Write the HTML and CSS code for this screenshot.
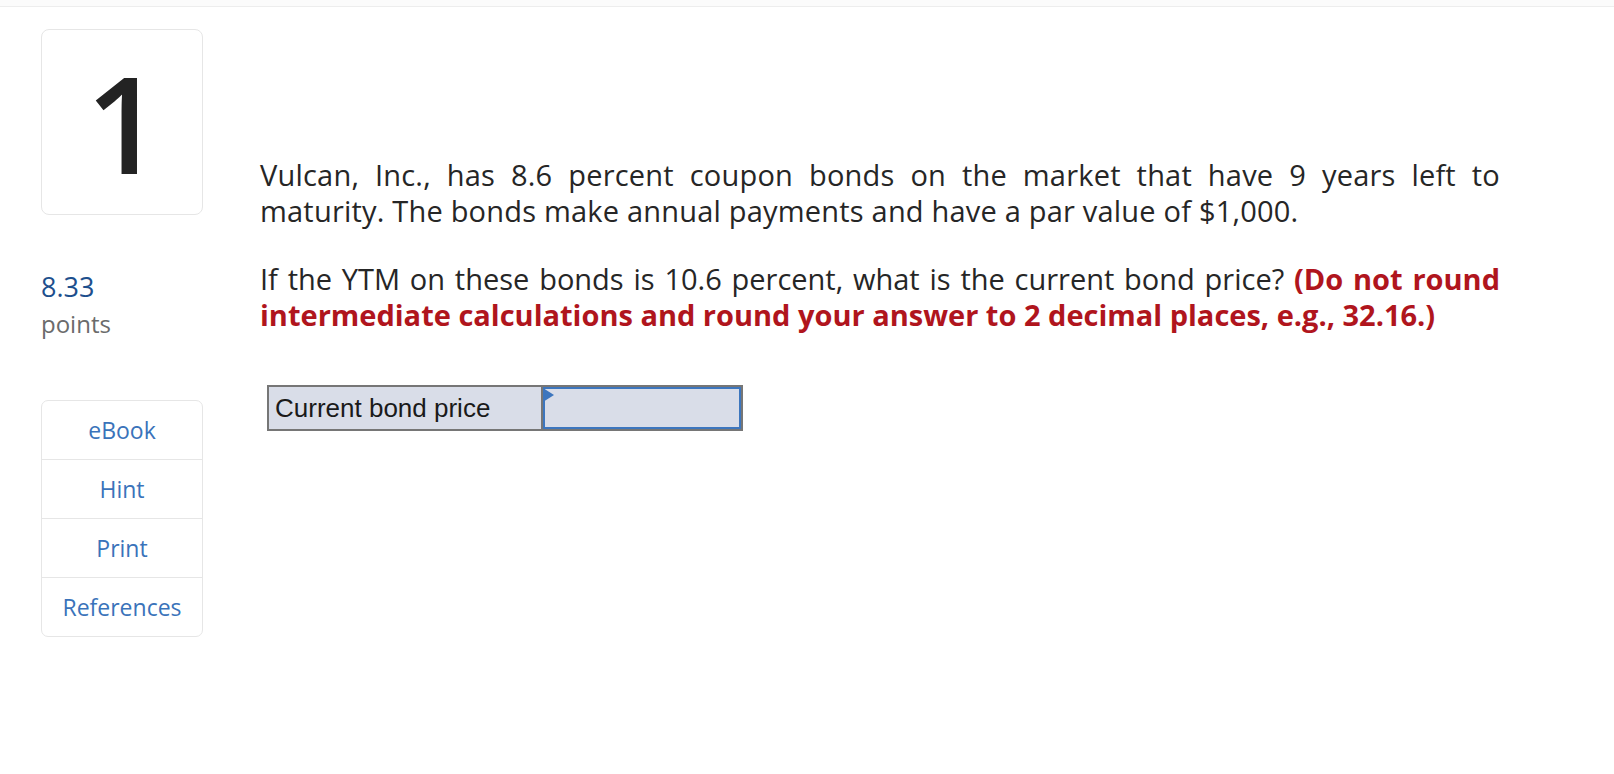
FILE: index.html
```html
<!DOCTYPE html>
<html>
<head>
<meta charset="utf-8">
<link rel="stylesheet" href="styles.css">
</head>
<body>
<div class="topbar"></div>
<div class="main">
  <div class="side">
    <div class="qcard"><span class="qnum">1</span></div>
    <div class="score">
      <div class="score-val">8.33</div>
      <div class="score-lbl">points</div>
    </div>
    <div class="tools">
      <div class="tool">eBook</div>
      <div class="tool">Hint</div>
      <div class="tool">Print</div>
      <div class="tool">References</div>
    </div>
  </div>
  <div class="content">
    <p class="para para1">Vulcan, Inc., has 8.6 percent coupon bonds on the market that have 9 years left to maturity. The bonds make annual payments and have a par value of $1,000.</p>
    <p class="para para2">If the YTM on these bonds is 10.6 percent, what is the current bond price? <strong class="note">(Do not round intermediate calculations and round your answer to 2 decimal places, e.g., 32.16.)</strong></p>
    <div class="answer">
      <div class="answer-label">Current bond price</div>
      <div class="answer-cell">
        <div class="answer-input"></div>
        <span class="flag"></span>
      </div>
    </div>
  </div>
</div>
</body>
</html>
```
FILE: styles.css
```css
html, body {
  margin: 0;
  padding: 0;
  background: #ffffff;
}
body {
  font-family: "Open Sans", "Liberation Sans", sans-serif;
  color: #262626;
  width: 1614px;
  height: 774px;
  overflow: hidden;
}
.topbar {
  height: 6px;
  background: #fbfbfb;
  border-bottom: 1px solid #ededed;
}
.main {
  display: flex;
  padding-left: 41px;
}
.side {
  width: 162px;
  flex: none;
  display: flex;
  flex-direction: column;
  padding-top: 22px;
}
.qcard {
  box-sizing: border-box;
  height: 186px;
  border: 1px solid #e6e6e6;
  border-radius: 8px;
  display: flex;
  align-items: center;
  justify-content: center;
}
.qnum {
  font-family: "Open Sans", Roboto, sans-serif;
  font-weight: 600;
  font-size: 134px;
  line-height: 1;
  color: #232323;
  padding-left: 4px;
}
.score {
  margin-top: 56px;
}
.score-val {
  font-size: 27px;
  line-height: 32px;
  color: #1d4f8d;
}
.score-lbl {
  font-size: 24px;
  line-height: 30px;
  margin-top: 6px;
  color: #6b6b6b;
}
.tools {
  margin-top: 61px;
  border: 1px solid #e6e6e6;
  border-radius: 7px;
  display: flex;
  flex-direction: column;
}
.tool {
  height: 58px;
  display: flex;
  align-items: center;
  justify-content: center;
  font-size: 23px;
  color: #3a73ba;
  border-top: 1px solid #e6e6e6;
}
.tool:first-child {
  border-top: none;
}
.content {
  margin-left: 57px;
  width: 1240px;
  padding-top: 150px;
}
.para {
  margin: 0;
  font-size: 29px;
  line-height: 36px;
  text-align: justify;
}
.para1 {
  letter-spacing: 0.2px;
}
.para2 {
  margin-top: 32px;
}
.note {
  color: #b0151d;
  font-weight: 700;
}
.answer {
  margin-top: 52px;
  margin-left: 7px;
  display: flex;
  width: 476px;
  height: 46px;
  box-sizing: border-box;
  border: 2px solid #767676;
  background: #d9dde8;
}
.answer-label {
  width: 274px;
  flex: none;
  box-sizing: border-box;
  padding-left: 6px;
  display: flex;
  align-items: center;
  font-family: "Liberation Sans", Arial, sans-serif;
  font-size: 26px;
  color: #1a1a1a;
  border-right: 2px solid #767676;
}
.answer-cell {
  flex: 1;
  position: relative;
  display: flex;
}
.answer-input {
  flex: 1;
  border: 2px solid #3d76be;
  background: #d9dde8;
}
.flag {
  position: absolute;
  left: 0;
  top: 1px;
  width: 0;
  height: 0;
  border-top: 7px solid transparent;
  border-bottom: 7px solid transparent;
  border-left: 11px solid #3d76be;
}
```
